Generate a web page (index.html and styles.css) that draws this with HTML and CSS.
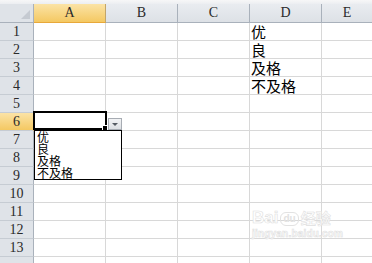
FILE: index.html
```html
<!DOCTYPE html>
<html>
<head>
<meta charset="utf-8">
<link rel="stylesheet" href="styles.css">
</head>
<body>
<div class="topstrip"></div>
<div class="sheet">
  <div class="grid">
    <div class="corner"><span class="tri"></span></div>
    <div class="ch active">A</div>
    <div class="ch">B</div>
    <div class="ch">C</div>
    <div class="ch">D</div>
    <div class="ch last">E</div>

    <div class="rh">1</div><div class="c"></div><div class="c"></div><div class="c"></div><div class="c val">优</div><div class="c last"></div>
    <div class="rh">2</div><div class="c"></div><div class="c"></div><div class="c"></div><div class="c val">良</div><div class="c last"></div>
    <div class="rh">3</div><div class="c"></div><div class="c"></div><div class="c"></div><div class="c val">及格</div><div class="c last"></div>
    <div class="rh">4</div><div class="c"></div><div class="c"></div><div class="c"></div><div class="c val">不及格</div><div class="c last"></div>
    <div class="rh">5</div><div class="c"></div><div class="c"></div><div class="c"></div><div class="c"></div><div class="c last"></div>
    <div class="rh active">6</div><div class="c"></div><div class="c"></div><div class="c"></div><div class="c"></div><div class="c last"></div>
    <div class="rh">7</div><div class="c"></div><div class="c"></div><div class="c"></div><div class="c"></div><div class="c last"></div>
    <div class="rh">8</div><div class="c"></div><div class="c"></div><div class="c"></div><div class="c"></div><div class="c last"></div>
    <div class="rh">9</div><div class="c"></div><div class="c"></div><div class="c"></div><div class="c"></div><div class="c last"></div>
    <div class="rh">10</div><div class="c"></div><div class="c"></div><div class="c"></div><div class="c"></div><div class="c last"></div>
    <div class="rh">11</div><div class="c"></div><div class="c"></div><div class="c"></div><div class="c"></div><div class="c last"></div>
    <div class="rh">12</div><div class="c"></div><div class="c"></div><div class="c"></div><div class="c"></div><div class="c last"></div>
    <div class="rh">13</div><div class="c"></div><div class="c"></div><div class="c"></div><div class="c"></div><div class="c last"></div>
    <div class="rh"></div><div class="c"></div><div class="c"></div><div class="c"></div><div class="c"></div><div class="c last"></div>
  </div>

  <div class="selection"><span class="handle"></span></div>
  <div class="ddbtn"><span class="arrow"></span></div>
  <div class="ddlist">
    <div class="item">优</div>
    <div class="item">良</div>
    <div class="item">及格</div>
    <div class="item">不及格</div>
  </div>

  <div class="watermark">
    <div class="wm-top"><span class="wm-bai">Bai</span><span class="wm-du">du</span><span class="wm-jy">经验</span></div>
    <div class="wm-url">jingyan.baidu.com</div>
  </div>
</div>
</body>
</html>
```

FILE: styles.css
```css
html, body {
  margin: 0;
  padding: 0;
  background: #ffffff;
  overflow: hidden;
}

.topstrip {
  height: 4px;
  background: linear-gradient(#f7f7f7, #eceef1);
}

.sheet {
  position: relative;
}

.grid {
  display: grid;
  grid-template-columns: 34px 72px 72px 72px 72px 1fr;
  grid-template-rows: 19px repeat(14, 18px);
}

.grid > div {
  box-sizing: border-box;
}

.corner {
  background: #dfe3e8;
  border-right: 1px solid #a9b1bb;
  border-bottom: 1px solid #a9b1bb;
  position: relative;
}

.tri {
  position: absolute;
  right: 3px;
  bottom: 3px;
  width: 0;
  height: 0;
  border-left: 9px solid transparent;
  border-bottom: 9px solid #c5cad1;
}

.ch {
  background: linear-gradient(#e9ecf0, #dde1e6);
  border-right: 1px solid #a9b1bb;
  border-bottom: 1px solid #a9b1bb;
  font-family: "Liberation Serif", "DejaVu Serif", serif;
  font-size: 14px;
  color: #2a2a2a;
  display: flex;
  align-items: center;
  justify-content: center;
  line-height: 1;
}

.ch.active {
  background: linear-gradient(#fbe3a6, #f4c862);
  border-bottom-color: #e8a83a;
  border-right-color: #c2a56a;
}

.ch.last, .c.last {
  border-right: none;
}

.rh {
  background: #dfe3e8;
  border-right: 1px solid #a9b1bb;
  border-bottom: 1px solid #c6ccd3;
  font-family: "Liberation Serif", "DejaVu Serif", serif;
  font-size: 14px;
  color: #2a2a2a;
  display: flex;
  align-items: center;
  justify-content: center;
  line-height: 1;
}

.rh.active {
  background: linear-gradient(#fbe3a6, #f4c862);
  border-right-color: #e8a83a;
}

.c {
  border-right: 1px solid #d8d8d8;
  border-bottom: 1px solid #d8d8d8;
}

.val {
  font-family: "Noto Sans CJK SC", sans-serif;
  font-size: 15px;
  color: #000;
  line-height: 17px;
  padding-left: 1px;
  white-space: nowrap;
  overflow: visible;
}

.selection {
  position: absolute;
  left: 33px;
  top: 107px;
  width: 74px;
  height: 19px;
  border: 2px solid #000;
  box-sizing: border-box;
  box-shadow: inset 0 0 0 1px #ffffff;
}

.handle {
  position: absolute;
  right: -3px;
  bottom: -3px;
  width: 4px;
  height: 4px;
  background: #000;
  border: 1px solid #fff;
}

.ddbtn {
  position: absolute;
  left: 108px;
  top: 114px;
  width: 14px;
  height: 12px;
  box-sizing: border-box;
  border: 1px solid #a7acb3;
  background: linear-gradient(#f2f3f5, #dcdfe3);
  display: flex;
  align-items: center;
  justify-content: center;
}

.arrow {
  width: 0;
  height: 0;
  border-left: 3px solid transparent;
  border-right: 3px solid transparent;
  border-top: 3px solid #555b63;
}

.ddlist {
  position: absolute;
  left: 34px;
  top: 126px;
  width: 88px;
  height: 50px;
  box-sizing: border-box;
  border: 1px solid #000;
  background: #fff;
  padding: 0 0 0 2px;
  display: flex;
  flex-direction: column;
}

.item {
  font-family: "Noto Sans CJK SC", sans-serif;
  font-size: 12px;
  line-height: 12px;
  height: 12px;
  color: #000;
  white-space: nowrap;
}

.watermark {
  position: absolute;
  left: 252px;
  top: 202px;
  width: 95px;
  font-family: "Liberation Sans", "Noto Sans CJK SC", sans-serif;
  color: #ffffff;
  -webkit-text-stroke: 0.6px #e0e0e0;
  pointer-events: none;
}

.wm-top {
  display: flex;
  align-items: flex-end;
  gap: 2px;
  height: 20px;
}

.wm-bai {
  font-size: 17px;
  font-weight: bold;
  line-height: 16px;
}

.wm-du {
  font-size: 10px;
  font-weight: bold;
  line-height: 12px;
  border: 1px solid #e2e2e2;
  border-radius: 6px;
  padding: 0 2px;
  -webkit-text-stroke: 0;
  color: #e2e2e2;
}

.wm-jy {
  font-family: "Noto Sans CJK SC", sans-serif;
  font-size: 15px;
  font-weight: bold;
  line-height: 16px;
}

.wm-url {
  font-size: 10px;
  font-weight: bold;
  line-height: 12px;
  margin-top: 2px;
  letter-spacing: 0.2px;
}
```
